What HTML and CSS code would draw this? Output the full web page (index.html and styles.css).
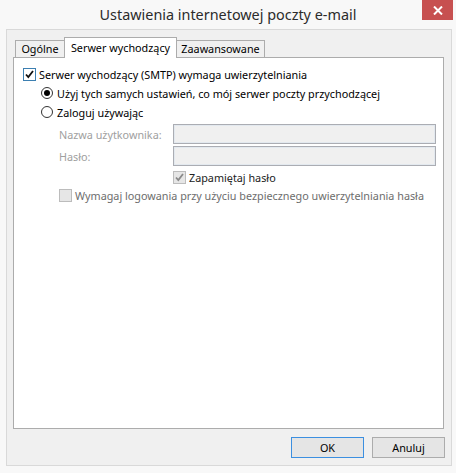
FILE: index.html
```html
<!DOCTYPE html>
<html>
<head>
    <title>Ustawienia internetowej poczty e-mail</title>
    <link rel="stylesheet" href="styles.css">
</head>
<body>
    <div class="titlebar">
        <span></span>
        <div class="title">Ustawienia internetowej poczty e-mail</div>
        <div class="close">
            <svg width="10" height="9" viewBox="0 0 10 9"><path d="M1 0.5 L9 8.5 M9 0.5 L1 8.5" stroke="#fff" stroke-width="2"/></svg>
        </div>
    </div>

    <div class="panel">
        <!-- tab strip -->
        <div class="tabs">
            <div class="tab first">Ogólne</div>
            <div class="tab active">Serwer wychodzący</div>
            <div class="tab last">Zaawansowane</div>
        </div>

        <div class="page">
            <div class="opt smtp">
                <span class="box focus"><svg width="11" height="11" viewBox="0 0 11 11"><path d="M2 5.5 L4.3 8 L9 2" fill="none" stroke="#111" stroke-width="1.8"/></svg></span>
                <span>Serwer wychodzący (SMTP) wymaga uwierzytelniania</span>
            </div>
            <div class="opt radio-row same">
                <span class="radio on"></span>
                <span>Użyj tych samych ustawień, co mój serwer poczty przychodzącej</span>
            </div>
            <div class="opt radio-row login">
                <span class="radio"></span>
                <span>Zaloguj używając</span>
            </div>
            <div class="field user">
                <label>Nazwa użytkownika:</label>
                <span class="input"></span>
            </div>
            <div class="field pass">
                <label>Hasło:</label>
                <span class="input"></span>
            </div>
            <div class="opt remember">
                <span class="box disabled"><svg width="11" height="11" viewBox="0 0 11 11"><path d="M2 5.5 L4.3 8 L9 2" fill="none" stroke="#8a8a8a" stroke-width="1.8"/></svg></span>
                <span>Zapamiętaj hasło</span>
            </div>
            <div class="opt spa">
                <span class="box disabled"></span>
                <span>Wymagaj logowania przy użyciu bezpiecznego uwierzytelniania hasła</span>
            </div>
        </div>

        <div class="buttons">
            <button class="btn default">OK</button>
            <button class="btn">Anuluj</button>
        </div>
    </div>
</body>
</html>
```

FILE: styles.css
```css
body {
    margin: 0;
    width: 456px;
    height: 473px;
    background-color: #f8f8f8;
    font-family: "Noto Sans", "Liberation Sans", sans-serif;
    font-size: 10.8px;
    color: #000;
    display: flex;
    flex-direction: column;
    overflow: hidden;
}

.titlebar {
    height: 29px;
    display: grid;
    grid-template-columns: 1fr auto 1fr;
    align-items: start;
}

.title {
    font-size: 14.4px;
    color: #2b2b2b;
    line-height: 29px;
}

.close {
    justify-self: end;
    margin-right: 3px;
    width: 31px;
    height: 20px;
    background-color: #c75050;
    display: flex;
    align-items: center;
    justify-content: center;
}

.panel {
    margin: 0 4px 7px 6px;
    flex: 1;
    background-color: #f0f0f0;
    border: 1px solid #d9d9d9;
    padding: 7px 7px 7px 6px;
    display: flex;
    flex-direction: column;
}

.tabs {
    display: flex;
    align-items: flex-end;
    height: 20px;
    margin-left: 2px;
}

.tab {
    height: 16px;
    border: 1px solid #acacac;
    border-bottom: none;
    background-color: #f0f0f0;
    display: flex;
    align-items: center;
    justify-content: center;
    line-height: 16px;
}

.tab.first {
    width: 48px;
    border-right: none;
}

.tab.active {
    width: 113px;
    height: 21px;
    margin-bottom: -1px;
    background-color: #fff;
    position: relative;
    z-index: 1;
    align-items: flex-start;
    padding-top: 2px;
    box-sizing: border-box;
}

.tab.last {
    width: 87px;
    border-left: none;
}

.page {
    flex: 1;
    background-color: #fff;
    border: 1px solid #acacac;
    padding: 10px 0 0 9px;
    display: flex;
    flex-direction: column;
}

.opt {
    display: flex;
    align-items: center;
    height: 13px;
    line-height: 13px;
    white-space: nowrap;
}

.box {
    width: 11px;
    height: 11px;
    border: 1px solid #333;
    background-color: #fff;
    margin-right: 3px;
    display: flex;
    align-items: center;
    justify-content: center;
    flex-shrink: 0;
}

.box.focus {
    border-color: #3c7fb1;
}

.box.disabled {
    border-color: #bcbcbc;
    background-color: #e6e6e6;
}

.radio-row {
    height: 12px;
    margin-left: 18px;
}

.same {
    margin-top: 6px;
}

.login {
    margin-top: 7px;
}

.radio {
    width: 10px;
    height: 10px;
    border: 1px solid #333;
    border-radius: 50%;
    background-color: #fff;
    margin-right: 4px;
    display: flex;
    align-items: center;
    justify-content: center;
}

.radio.on::after {
    content: "";
    width: 6px;
    height: 6px;
    border-radius: 50%;
    background-color: #000;
}

.field {
    display: flex;
    align-items: center;
    margin-left: 36px;
    height: 20px;
}

.field.user {
    margin-top: 6px;
}

.field.pass {
    margin-top: 2px;
}

.field label {
    width: 114px;
    color: #a0a0a0;
}

.input {
    width: 261px;
    height: 18px;
    border: 1px solid #abadb3;
    background-color: #f0f0f0;
    box-shadow: inset 0 0 0 1px #e3e9ef;
}

.remember {
    margin-top: 5px;
    margin-left: 150px;
    color: #222;
}

.spa {
    margin-top: 5px;
    margin-left: 36px;
    color: #6d6d6d;
}

.buttons {
    display: flex;
    justify-content: flex-end;
    gap: 8px;
    margin-top: 8px;
    margin-right: -1px;
}

.btn {
    width: 73px;
    height: 21px;
    padding: 0;
    font-family: inherit;
    font-size: 10.8px;
    color: #000;
    border: 1px solid #acacac;
    background-color: #e5e5e5;
}

.btn.default {
    border-color: #3c8fe0;
}
```
